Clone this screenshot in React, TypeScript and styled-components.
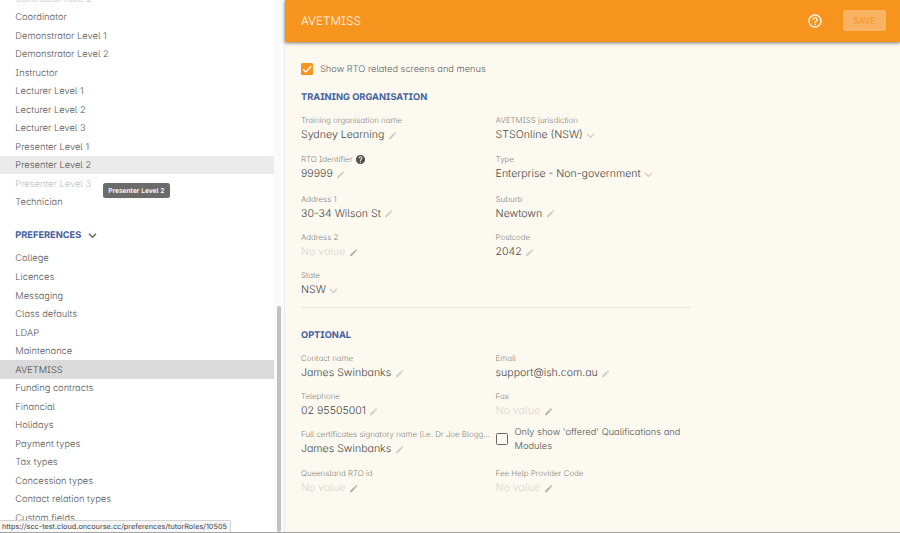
import React from 'react';
import styled, { createGlobalStyle } from 'styled-components';

const GlobalStyle = createGlobalStyle`
  *, *::before, *::after { box-sizing: border-box; }
  body {
    margin: 0;
    overflow: hidden;
    font-family: Inter, "Liberation Sans", sans-serif;
    font-feature-settings: 'cv05', 'cv08', 'cv11';
    text-rendering: geometricPrecision;
    background: #fcf9f0;
  }
`;

const Page = styled.div`
  position: relative;
  display: flex;
  width: 900px;
  height: 533px;
  overflow: hidden;
  border-bottom: 1px solid #a3a3a1;
`;

const Sidebar = styled.aside`
  display: flex;
  flex: none;
  width: 285px;
  height: 533px;
  overflow: hidden;
  background: #fff;
`;

const Menu = styled.nav`
  width: 274px;
  flex: none;
  margin-top: -10.8px;
`;

const MenuItem = styled.div<{ $state?: 'hover' | 'active' | 'disabled' }>`
  display: flex;
  align-items: center;
  height: 18.53px;
  padding: 1.3px 0 0 15.3px;
  font-size: 9.32px;
  font-weight: 350;
  white-space: nowrap;
  color: ${p => (p.$state === 'disabled' ? '#c2c2c2' : p.$state === 'active' ? '#484848' : '#585858')};
  background: ${p => (p.$state === 'hover' ? '#ebebeb' : p.$state === 'active' ? '#dadada' : 'transparent')};
`;

const MenuHeading = styled.div`
  display: flex;
  align-items: center;
  gap: 6.5px;
  height: 37.7px;
  padding: 11.4px 0 0 15.3px;
  font-size: 9.25px;
  font-weight: 700;
  color: #42609c;
`;

const Track = styled.div`
  flex: 1;
  padding: 305.5px 3px 0 2.5px;
  background: #fafafa;
  border-right: 1px solid #ededeb;
`;

const Thumb = styled.div`
  height: 226.5px;
  border-radius: 3px;
  background: #c1c1c1;
`;

const Main = styled.main`
  flex: 1;
  display: flex;
  flex-direction: column;
  height: 533px;
  background: #fcf9f0;
`;

const AppBar = styled.header`
  display: flex;
  align-items: center;
  flex: none;
  height: 41.6px;
  padding: 0 14.5px 0 16px;
  background: #f7941d;
  box-shadow: 0 1px 3px rgba(0, 0, 0, 0.4), 0 1px 5px rgba(0, 0, 0, 0.16);
`;

const Title = styled.h1`
  flex: 1;
  margin: 0;
  font-size: 11.75px;
  font-weight: 300;
  color: #fffaf2;
`;

const SaveButton = styled.button`
  width: 42.5px;
  height: 21px;
  margin-left: 20.2px;
  padding: 0;
  border: 0;
  border-radius: 2.5px;
  background: #fab363;
  color: #f79d34;
  font: 600 8.6px Inter, sans-serif;
`;

const Form = styled.div`
  width: 406px;
  padding: 20.4px 0 0 16px;
`;

const CheckRow = styled.label<{ $wrap?: boolean }>`
  display: flex;
  align-items: center;
  gap: 7px;
  height: ${p => (p.$wrap ? 28 : 15)}px;
  margin-top: ${p => (p.$wrap ? -4 : 0)}px;
  font-size: 9.27px;
  font-weight: 350;
  line-height: 14px;
  color: ${p => (p.$wrap ? '#51504d' : '#5d5c59')};
`;

const CheckText = styled.span`
  padding-top: 1.2px;
`;

const Box = styled.span<{ $checked?: boolean }>`
  display: flex;
  flex: none;
  width: 12px;
  height: 12px;
  border-radius: 1.5px;
  border: ${p => (p.$checked ? '0' : '1.3px solid #676663')};
  background: ${p => (p.$checked ? '#f7941d' : 'transparent')};
`;

const SectionTitle = styled.h2<{ $top: number }>`
  height: 14px;
  margin: ${p => p.$top}px 0 0;
  font-size: 9.25px;
  line-height: 15.6px;
  font-weight: 700;
  color: #42609c;
`;

const Fields = styled.div<{ $rows: string }>`
  display: grid;
  grid-template-columns: 194.6px 195px;
  grid-template-rows: ${p => p.$rows};
  margin-top: 11.2px;
`;

const Field = styled.div`
  min-width: 0;
`;

const Label = styled.div`
  display: flex;
  align-items: center;
  gap: 2.5px;
  height: 11px;
  font-size: 7.91px;
  font-weight: 350;
  line-height: 11px;
  white-space: nowrap;
  color: #878681;
`;

const Value = styled.div<{ $empty?: boolean }>`
  display: flex;
  align-items: center;
  gap: 3.5px;
  height: 18px;
  font-size: 10.58px;
  font-weight: 350;
  line-height: 18px;
  white-space: nowrap;
  color: ${p => (p.$empty ? '#dad8d1' : '#474643')};
`;

const PencilSvg = styled.svg<{ $dark?: boolean }>`
  width: 9.3px;
  height: 9.3px;
  margin-top: 1px;
  fill: ${p => (p.$dark ? '#b4b2ad' : '#cfcdc6')};
`;

const ArrowSvg = styled.svg<{ $strong?: boolean }>`
  width: 9px;
  height: 9px;
  margin-top: ${p => (p.$strong ? 0 : 1)}px;
  fill: none;
  stroke: ${p => (p.$strong ? '#676767' : '#cac8c1')};
  stroke-width: ${p => (p.$strong ? 1.5 : 1.2)};
`;

const Glyph = styled.svg<{ $size: number; $color: string }>`
  flex: none;
  width: ${p => p.$size}px;
  height: ${p => p.$size}px;
  fill: ${p => p.$color};
`;

const Divider = styled.hr`
  width: 390px;
  height: 1px;
  margin: 0;
  border: 0;
  background: #e6e4dc;
`;

const Tooltip = styled.div`
  position: absolute;
  left: 103px;
  top: 183px;
  width: 66.5px;
  height: 15px;
  border-radius: 2.5px;
  background: #6b6b6b;
  color: #fff;
  font-size: 6.68px;
  font-weight: 600;
  line-height: 16.6px;
  text-align: center;
  white-space: nowrap;
`;

const StatusBar = styled.div`
  position: absolute;
  left: 0;
  bottom: 0;
  width: 230.5px;
  height: 12.5px;
  padding-left: 2px;
  border: 1px solid #d3d3d3;
  border-left: 0;
  border-bottom: 0;
  border-radius: 0 2px 0 0;
  background: #f6f6f6;
  color: #454545;
  font-size: 7.3px;
  line-height: 12px;
  white-space: nowrap;
`;

const Pencil = ({ dark }: { dark?: boolean }) => (
  <PencilSvg $dark={dark} viewBox="0 0 24 24">
    <path d="M3 17.25V21h3.75L17.81 9.94l-3.75-3.75L3 17.25zM20.71 7.04a1 1 0 0 0 0-1.41l-2.34-2.34a1 1 0 0 0-1.41 0l-1.83 1.83 3.75 3.75 1.83-1.83z" />
  </PencilSvg>
);

const Arrow = ({ strong }: { strong?: boolean }) => (
  <ArrowSvg $strong={strong} viewBox="0 0 9 9">
    <path d="M1 2.8 4.5 6.3 8 2.8" />
  </ArrowSvg>
);

interface FieldProps {
  label: string;
  value?: string;
  select?: boolean;
  help?: boolean;
}

const TextField = ({ label, value, select, help }: FieldProps) => (
  <Field>
    <Label>
      <span>{label}</span>
      {help && (
        <Glyph $size={11} $color="#555451" viewBox="0 0 24 24">
          <path d="M12 2C6.48 2 2 6.48 2 12s4.48 10 10 10 10-4.48 10-10S17.52 2 12 2zm1 17h-2v-2h2v2zm2.07-7.75-.9.92C13.45 12.9 13 13.5 13 15h-2v-.5c0-1.1.45-2.1 1.17-2.83l1.24-1.26c.37-.36.59-.86.59-1.41 0-1.1-.9-2-2-2s-2 .9-2 2H8c0-2.21 1.79-4 4-4s4 1.79 4 4c0 .88-.36 1.68-.93 2.25z" />
        </Glyph>
      )}
    </Label>
    <Value $empty={!value}>
      {value || 'No value'}
      {select ? <Arrow /> : <Pencil dark={!value} />}
    </Value>
  </Field>
);

const roles = [
  'Contractor Rate 2', 'Coordinator', 'Demonstrator Level 1', 'Demonstrator Level 2', 'Instructor',
  'Lecturer Level 1', 'Lecturer Level 2', 'Lecturer Level 3', 'Presenter Level 1', 'Presenter Level 2',
  'Presenter Level 3', 'Technician',
];

const roleState: Record<string, 'hover' | 'disabled'> = {
  'Contractor Rate 2': 'disabled',
  'Presenter Level 2': 'hover',
  'Presenter Level 3': 'disabled',
};

const preferences = [
  'College', 'Licences', 'Messaging', 'Class defaults', 'LDAP', 'Maintenance', 'AVETMISS',
  'Funding contracts', 'Financial', 'Holidays', 'Payment types', 'Tax types', 'Concession types',
  'Contact relation types', 'Custom fields',
];

export default function App() {
  return (
    <>
      <GlobalStyle />
      <Page>
        <Sidebar>
          <Menu>
            {roles.map(r => <MenuItem key={r} $state={roleState[r]}>{r}</MenuItem>)}
            <MenuHeading>PREFERENCES <Arrow strong /></MenuHeading>
            {preferences.map(p => (
              <MenuItem key={p} $state={p === 'AVETMISS' ? 'active' : undefined}>{p}</MenuItem>
            ))}
          </Menu>
          <Track><Thumb /></Track>
        </Sidebar>
        <Main>
          <AppBar>
            <Title>AVETMISS</Title>
            <Glyph $size={16} $color="#fff8ec" viewBox="0 0 24 24">
              <path d="M11 18h2v-2h-2v2zm1-16C6.48 2 2 6.48 2 12s4.48 10 10 10 10-4.48 10-10S17.52 2 12 2zm0 18c-4.41 0-8-3.59-8-8s3.59-8 8-8 8 3.59 8 8-3.59 8-8 8zm0-14c-2.21 0-4 1.79-4 4h2c0-1.1.9-2 2-2s2 .9 2 2c0 2-3 1.75-3 5h2c0-2.25 3-2.5 3-5 0-2.21-1.79-4-4-4z" />
            </Glyph>
            <SaveButton>SAVE</SaveButton>
          </AppBar>
          <Form>
            <CheckRow>
              <Box $checked>
                <Glyph $size={12} $color="none" viewBox="0 0 12 12">
                  <path d="M2 6.2 4.8 9 10.2 3.3" stroke="#fff" strokeWidth="1.4" />
                </Glyph>
              </Box>
              <CheckText>Show RTO related screens and menus</CheckText>
            </CheckRow>
            <SectionTitle $top={13.2}>TRAINING ORGANISATION</SectionTitle>
            <Fields $rows="39.1px 39.1px 38.3px 38.3px 36.7px">
              <TextField label="Training organisation name" value="Sydney Learning" />
              <TextField label="AVETMISS jurisdiction" value="STSOnline (NSW)" select />
              <TextField label="RTO Identifier" value="99999" help />
              <TextField label="Type" value="Enterprise - Non-government" select />
              <TextField label="Address 1" value="30-34 Wilson St" />
              <TextField label="Suburb" value="Newtown" />
              <TextField label="Address 2" />
              <TextField label="Postcode" value="2042" />
              <TextField label="State" value="NSW" select />
            </Fields>
            <Divider />
            <SectionTitle $top={19.8}>OPTIONAL</SectionTitle>
            <Fields $rows="repeat(4, 38.3px)">
              <TextField label="Contact name" value="James Swinbanks" />
              <TextField label="Email" value="support@ish.com.au" />
              <TextField label="Telephone" value="02 95505001" />
              <TextField label="Fax" />
              <TextField label="Full certificates signatory name (i.e. Dr Joe Blogg..." value="James Swinbanks" />
              <CheckRow $wrap>
                <Box />
                <CheckText>Only show 'offered' Qualifications and Modules</CheckText>
              </CheckRow>
              <TextField label="Queensland RTO id" />
              <TextField label="Fee Help Provider Code" />
            </Fields>
          </Form>
        </Main>
        <Tooltip>Presenter Level 2</Tooltip>
        <StatusBar>https://scc-test.cloud.oncourse.cc/preferences/tutorRoles/10505</StatusBar>
      </Page>
    </>
  );
}
